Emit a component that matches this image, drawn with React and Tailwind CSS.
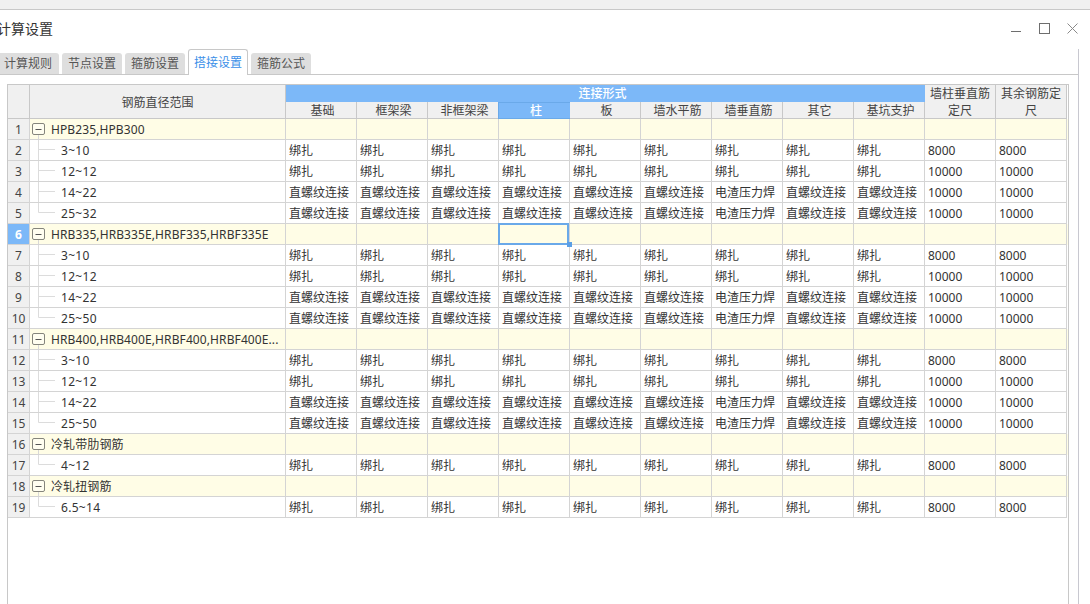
const DATA_COLUMNS = ["基础", "框架梁", "非框架梁", "柱", "板", "墙水平筋", "墙垂直筋", "其它", "基坑支护"];
const TABS = ["计算规则", "节点设置", "箍筋设置", "搭接设置", "箍筋公式"];

const BIND = "绑扎";
const THREAD = "直螺纹连接";
const WELD = "电渣压力焊";

const GRID = "grid grid-cols-[22px_256px_repeat(11,71px)]";

const SMALL = { types: Array(9).fill(BIND) };
const LARGE = { types: [THREAD, THREAD, THREAD, THREAD, THREAD, THREAD, WELD, THREAD, THREAD] };

const GROUPS = [
  {
    name: "HPB235,HPB300",
    items: [
      { range: "3~10", ...SMALL, a: "8000", b: "8000" },
      { range: "12~12", ...SMALL, a: "10000", b: "10000" },
      { range: "14~22", ...LARGE, a: "10000", b: "10000" },
      { range: "25~32", ...LARGE, a: "10000", b: "10000" },
    ],
  },
  {
    name: "HRB335,HRB335E,HRBF335,HRBF335E",
    items: [
      { range: "3~10", ...SMALL, a: "8000", b: "8000" },
      { range: "12~12", ...SMALL, a: "10000", b: "10000" },
      { range: "14~22", ...LARGE, a: "10000", b: "10000" },
      { range: "25~50", ...LARGE, a: "10000", b: "10000" },
    ],
  },
  {
    name: "HRB400,HRB400E,HRBF400,HRBF400E...",
    items: [
      { range: "3~10", ...SMALL, a: "8000", b: "8000" },
      { range: "12~12", ...SMALL, a: "10000", b: "10000" },
      { range: "14~22", ...LARGE, a: "10000", b: "10000" },
      { range: "25~50", ...LARGE, a: "10000", b: "10000" },
    ],
  },
  { name: "冷轧带肋钢筋", items: [{ range: "4~12", ...SMALL, a: "8000", b: "8000" }] },
  { name: "冷轧扭钢筋", items: [{ range: "6.5~14", ...SMALL, a: "8000", b: "8000" }] },
];

function buildRows() {
  const rows = [];
  GROUPS.forEach((group) => {
    rows.push({ parent: true, name: group.name });
    group.items.forEach((item, index) => {
      rows.push({ ...item, last: index === group.items.length - 1 });
    });
  });
  return rows;
}

function CollapseBox() {
  return (
    <svg width="21" height="20" className="shrink-0">
      <rect x="2.5" y="4.5" width="12" height="11" rx="1.5" fill="#fffef0" stroke="#85857c" />
      <path d="M5.5 10.5H11.5" stroke="#555" />
      <path d="M8.5 16V20" stroke="#d8d8d8" />
    </svg>
  );
}

function TreeLine({ last }) {
  return (
    <svg width="31" height="20" className="shrink-0">
      <path d={last ? "M8.5 0V9.5H25" : "M8.5 0V20M9 9.5H25"} fill="none" stroke="#dcdcdc" />
    </svg>
  );
}

function NumberCell({ n, active }) {
  return (
    <div
      className={
        active
          ? "flex items-center justify-center border-r border-b border-[#d4d4d4] bg-[#7cb8f8] pt-[2px] font-bold text-white"
          : "flex items-center justify-center border-r border-b border-[#d4d4d4] bg-[#f0f0f0] pt-[2px] text-[#444]"
      }
    >
      {n}
    </div>
  );
}

function Cell({ children, selected }) {
  return (
    <div className="relative flex items-center overflow-visible border-r border-b border-[#d4d4d4] pt-[2px] pl-[3px] whitespace-nowrap">
      {children}
      {selected && (
        <>
          <div className="absolute -top-px -left-px h-[22px] w-[71px] border-2 border-[#6aa9e9]" />
          <div className="absolute -right-[3px] -bottom-[3px] z-10 size-[5px] bg-[#5a9fe6]" />
        </>
      )}
    </div>
  );
}

function Row({ row, n }) {
  if (row.parent) {
    return (
      <div className={`${GRID} h-[21px] bg-[#fffde6]`}>
        <NumberCell n={n} active={n === 6} />
        <div className="flex items-center overflow-hidden border-r border-b border-[#d4d4d4] whitespace-nowrap">
          <CollapseBox />
          <span className="truncate pt-[2px] tracking-[0.1px]">{row.name}</span>
        </div>
        {Array.from({ length: 11 }).map((_, i) => (
          <Cell key={i} selected={n === 6 && i === 3} />
        ))}
      </div>
    );
  }
  return (
    <div className={`${GRID} h-[21px] bg-white`}>
      <NumberCell n={n} />
      <div className="flex items-center overflow-hidden border-r border-b border-[#d4d4d4] whitespace-nowrap">
        <TreeLine last={row.last} />
        <span className="pt-[2px] tracking-[0.3px]">{row.range}</span>
      </div>
      {row.types.map((type, i) => (
        <Cell key={i}>{type}</Cell>
      ))}
      <Cell>{row.a}</Cell>
      <Cell>{row.b}</Cell>
    </div>
  );
}

function Header() {
  const head = "flex items-center justify-center border-r border-b border-[#c8c8c8] bg-[#f0f0f0] text-[#444]";
  return (
    <div className={`${GRID} h-[34px] grid-rows-[17px_17px]`}>
      <div className={`${head} row-span-2`} />
      <div className={`${head} row-span-2 pt-[2px]`}>钢筋直径范围</div>
      <div className="col-span-9 flex items-center justify-center bg-[#7cb8f8] pr-[6px] font-medium text-white">连接形式</div>
      <div className={`${head} row-span-2 col-start-12 row-start-1 pt-px text-center leading-[17px]`}>墙柱垂直筋定尺</div>
      <div className={`${head} row-span-2 col-start-13 row-start-1 pt-px text-center leading-[17px]`}>其余钢筋定尺</div>
      {DATA_COLUMNS.map((name) =>
        name === "柱" ? (
          <div key={name} className="-ml-px flex items-center justify-center border-y border-l border-[#6aa9e9] bg-[#7cb8f8] pt-px pl-[3px] font-medium text-white">
            {name}
          </div>
        ) : (
          <div key={name} className={`${head} pt-[2px] pl-[3px]`}>
            {name}
          </div>
        )
      )}
    </div>
  );
}

function WindowButtons() {
  return (
    <div className="mb-[3px] flex items-center gap-[17px] text-[#6e6e6e]">
      <svg width="11" height="11">
        <path d="M0 8.5H10" stroke="currentColor" />
      </svg>
      <svg width="11" height="11">
        <rect x="0.5" y="0.5" width="10" height="10" fill="none" stroke="currentColor" />
      </svg>
      <svg width="11" height="11">
        <path d="M0.5 0.5L10.5 10.5M10.5 0.5L0.5 10.5" fill="none" stroke="#8a8a8a" />
      </svg>
    </div>
  );
}

export default function App() {
  const rows = buildRows();
  return (
    <div className="flex h-[604px] w-[1090px] flex-col overflow-hidden bg-white font-['Noto_Sans','Noto_Sans_CJK_SC',sans-serif] text-[12px] text-[#333]">
      <div className="h-[10px] shrink-0 border-b border-[#c8c8c8] bg-[#f0f0f0]" />
      <div className="flex h-[39px] shrink-0 items-center justify-between pr-[12px]">
        <div className="-ml-[3px] mb-[2px] text-[14px] text-[#333]">计算设置</div>
        <WindowButtons />
      </div>
      <div className="flex min-h-0 w-[1079px] flex-1 flex-col border-r border-[#c8c8d0]">
        <div className="-ml-[3px] flex h-[26px] shrink-0 items-end gap-[3px] border-b border-[#c8c8c8]">
          {TABS.map((tab, i) =>
            tab === "搭接设置" ? (
              <div
                key={tab}
                className="relative z-10 -mb-px flex h-[26px] w-[60px] items-center justify-center rounded-t-[3px] border border-b-0 border-[#c8c8c8] bg-white text-[#3b8fe8]"
              >
                {tab}
              </div>
            ) : (
              <div
                key={tab}
                className={
                  i === 0
                    ? "flex h-[21px] w-[62px] items-center justify-center rounded-t-[3px] bg-[#dedede] text-[#555]"
                    : "flex h-[21px] w-[60px] items-center justify-center rounded-t-[3px] bg-[#dedede] text-[#555]"
                }
              >
                {tab}
              </div>
            )
          )}
        </div>
        <div className="mt-[9px] ml-[7px] w-[1062px] flex-1 border-x border-t border-[#c8c8c8]">
          <Header />
          {rows.map((row, index) => (
            <Row key={index} row={row} n={index + 1} />
          ))}
        </div>
      </div>
    </div>
  );
}
